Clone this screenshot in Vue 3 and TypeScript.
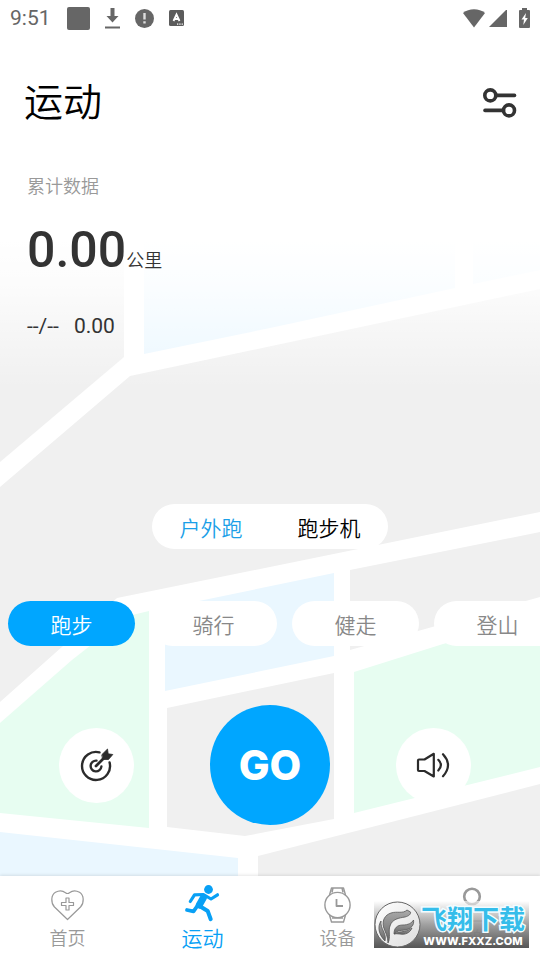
<script setup lang="ts">
import { ref } from 'vue'

const modes: string[] = ['户外跑', '跑步机']
const sports: string[] = ['跑步', '骑行', '健走', '登山']
const activeMode = ref(0)
const activeSport = ref(0)
</script>

<template>
  <div class="page">
    <svg class="map" viewBox="0 0 540 876" preserveAspectRatio="xMidYMax slice" aria-hidden="true">
      <defs>
        <linearGradient id="fade" x1="0" y1="0" x2="0" y2="1">
          <stop offset="0" stop-color="#fff" />
          <stop offset="0.3" stop-color="#fff" stop-opacity="0.8" />
          <stop offset="1" stop-color="#fff" stop-opacity="0" />
        </linearGradient>
      </defs>
      <g fill="#f0f0f0">
        <path d="M0 220H124V357L0 462Z" />
        <path d="M540 289L130 376L0 487V702L117 598L540 512Z" />
        <path d="M350 570L540 532V597L350 650Z" />
        <path d="M167 708L334 673V819L245 836L167 827Z" />
        <path d="M258 876V856L540 784V876Z" />
      </g>
      <g fill="#eaf7ff">
        <path d="M144 220H455V288L270 328L144 354Z" />
        <path d="M473 220H540V270L473 284Z" />
        <path d="M165 608L334 573V656L165 691Z" />
        <path d="M0 832L238 858V876H0Z" />
      </g>
      <g fill="#e7fdf1">
        <path d="M0 723L72 660L128 616L149 611V828L0 813Z" />
        <path d="M354 672L443 644L540 618V767L354 813Z" />
      </g>
      <rect width="540" height="241" fill="#fff" />
      <rect y="240" width="540" height="148" fill="url(#fade)" />
    </svg>

    <div class="status">
      <span class="clock">9:51</span>
      <svg width="23" height="23" viewBox="0 0 23 23"><rect width="23" height="23" rx="2" fill="#666" /></svg>
      <svg width="15" height="22" viewBox="0 0 15 22" fill="#666"><path d="M5.500 1H9.500V9H13.500L7.500 15.500L1.500 9H5.500ZM0 19.500H15V21.500H0Z" /></svg>
      <svg width="19" height="19" viewBox="0 0 19 19"><circle cx="9.500" cy="9.500" r="9.500" fill="#666" /><path d="M8.300 4H10.700V10.500H8.300ZM8.300 12.200H10.700V14.600H8.300Z" fill="#ddd" /></svg>
      <svg width="15" height="16" viewBox="0 0 15 16"><rect width="15" height="16" rx="1.500" fill="#5c5c5c" /><path d="M4.500 11L7.500 4.500L10.500 11M5.500 9H9.500" fill="none" stroke="#fff" stroke-width="1.800" /><path d="M8 13.500h1.300v1.300H8zM10.300 13.500h1.300v1.300h-1.300zM12.600 13.500h1.300v1.300h-1.300z" fill="#fff" /></svg>
      <div class="signals">
        <svg width="22" height="19" viewBox="0 0 22 19" fill="#666"><path d="M0 4C6-1 16-1 22 4L11 18.500Z" /></svg>
        <svg width="18" height="18" viewBox="0 0 18 18" fill="#666"><path d="M18 1V18H0L17 1Z" /></svg>
        <svg class="battery" width="11" height="20" viewBox="0 0 11 20"><path d="M3 0H8V2H10Q11 2 11 3V19Q11 20 10 20H1Q0 20 0 19V3Q0 2 1 2H3Z" fill="#666" /><path d="M7 5L2.500 11.500H5L4.300 17L8.800 10H6.200Z" fill="#fff" /></svg>
      </div>
    </div>

    <header class="header">
      <h1>运动</h1>
      <button class="settings" type="button" aria-label="设置">
        <svg width="34" height="30" viewBox="0 0 34 30" fill="none" stroke="#333" stroke-width="3.600" stroke-linecap="round">
          <circle cx="7.300" cy="7.400" r="5.500" /><path d="M13 7.400H31.500" />
          <circle cx="26" cy="22.400" r="5.500" /><path d="M2 22.400H20.300" />
        </svg>
      </button>
    </header>

    <section class="stats">
      <p class="caption">累计数据</p>
      <p class="total"><strong>0.00</strong><span>公里</span></p>
      <p class="detail"><span>--/--</span><span>0.00</span></p>
    </section>

    <div class="modes">
      <button v-for="(mode, i) in modes" :key="mode" type="button" :class="{ active: i === activeMode }" @click="activeMode = i">{{ mode }}</button>
    </div>

    <div class="sports">
      <button v-for="(sport, i) in sports" :key="sport" type="button" :class="{ active: i === activeSport }" @click="activeSport = i">{{ sport }}</button>
    </div>

    <div class="actions">
      <button class="round goal" type="button" aria-label="目标">
        <svg width="36" height="36" viewBox="0 0 36 36" fill="none" stroke="#2b2b2b" stroke-width="2.400" stroke-linecap="round">
          <path d="M20.500 5.400A14 14 0 1 0 30.600 15.500" />
          <path d="M17.500 13.600A5.400 5.400 0 1 0 22.400 19.500" />
          <path d="M17 19L25 11" stroke-width="2.800" />
          <path d="M23 7.500L28.500 2L29.200 6.800L33.800 7.500L29.500 12.500L24 12.500Z" fill="#2b2b2b" stroke-width="0.800" stroke-linejoin="round" />
        </svg>
      </button>
      <button class="go" type="button">GO</button>
      <button class="round sound" type="button" aria-label="声音">
        <svg width="36" height="36" viewBox="0 0 36 36" fill="none" stroke="#2b2b2b" stroke-width="2.200" stroke-linecap="round" stroke-linejoin="round">
          <path d="M3 12.500H8.500L17.800 6.800V29.500L8.500 24H3Q2 24 2 23V13.500Q2 12.500 3 12.500Z" />
          <path d="M22.300 12.800Q27.500 18 22.300 23.500M27 7.200Q37 18 27 29.300" />
        </svg>
      </button>
    </div>

    <nav class="tabs">
      <a href="#home">
        <svg width="40" height="40" viewBox="0 0 40 40" fill="none" stroke="#999" stroke-width="1.200" stroke-linejoin="round">
          <path d="M19.500 34.500L6.500 22C2.500 17.500 3 10 7.500 7.300C11.500 5 15 5.700 17.500 7.700Q19.500 9.300 21.500 7.700C24 5.700 27.500 5 31.500 7.300C36 10 36.500 17.500 32.500 22Z" />
          <path d="M18 13H21V17.500H25.500V20.500H21V25H18V20.500H13.500V17.500H18Z" />
        </svg>
        <span>首页</span>
      </a>
      <a href="#sport" class="active">
        <svg width="40" height="40" viewBox="0 0 40 40" fill="none" stroke="#08a0f5" stroke-linecap="round" stroke-linejoin="round">
          <circle cx="25.500" cy="4.500" r="4.400" fill="#08a0f5" stroke="none" />
          <path d="M7.300 16.500L11.500 9.800L20.500 9.500L28 14L34.500 9.800" stroke-width="3.200" />
          <path d="M20.500 12.500L16.300 20" stroke-width="7" />
          <path d="M16.500 21L24.700 26L27.700 34.200" stroke-width="4" />
          <path d="M15 20L10.500 26.300L4 25" stroke-width="3.800" />
        </svg>
        <span>运动</span>
      </a>
      <a href="#device">
        <svg width="40" height="40" viewBox="0 0 40 40" fill="none" stroke="#999" stroke-width="1.400" stroke-linejoin="round">
          <circle cx="19.500" cy="20" r="12.600" />
          <path d="M11.500 10L13.500 3H25.500L27.500 10M15 3L14 7.500M24 3L25 7.500M11.500 30L13.500 37H25.500L27.500 30M14 33H25" />
          <path d="M18.500 14V21H25" stroke-width="1.800" />
        </svg>
        <span>设备</span>
      </a>
      <a href="#me">
        <svg width="40" height="40" viewBox="0 0 40 40" fill="none" stroke="#999" stroke-width="2.600">
          <circle cx="19" cy="11.500" r="7.800" />
          <path d="M6 36Q6 24 19 24T32 36Z" stroke-width="1.400" />
        </svg>
        <span>我的</span>
      </a>
      <div class="watermark">
        <svg width="47" height="47" viewBox="0 0 47 47">
          <defs>
            <linearGradient id="disc" x1="0" y1="0" x2="1" y2="1">
              <stop offset="0" stop-color="#fff" /><stop offset="1" stop-color="#ddd" />
            </linearGradient>
            <linearGradient id="swirl" x1="0" y1="0" x2="0" y2="1">
              <stop offset="0" stop-color="#aaa" /><stop offset="1" stop-color="#666" />
            </linearGradient>
          </defs>
          <circle cx="23.500" cy="23.500" r="22.500" fill="url(#disc)" stroke="#666" />
          <g fill="url(#swirl)" stroke="#555" stroke-width="0.800">
            <path d="M14 42C17 36 14 30 16 25C18 18 25 17 31 16C35 15 37 13 36.500 11L33 9C29 13 23 10 17 12C11 14 8 19 9.500 26C11 31 14 35 14 42Z" />
            <path d="M7 20C6 28 13 32 11 40C5 34 3 26 7 20Z" />
            <path d="M20 33C20 27 23 24 29 24C34 24 38 22 39.500 19C40.500 24 37 28 31 29C26 29.500 22 30 20 33Z" />
            <path d="M20 33C24 30 31 32 38 27C36 32 31 34 26 33Q22 32.500 20 33Z" />
          </g>
        </svg>
        <div class="brand"><b>飞翔下载</b><small>WWW.FXXZ.COM</small></div>
      </div>
    </nav>
  </div>
</template>

<style>
body {
  margin: 0;
}
</style>

<style scoped>
.page {
  position: relative;
  display: flex;
  flex-direction: column;
  min-height: 100vh;
  overflow: hidden;
  background: #fff;
  color: #333;
  font-family: Roboto, "Noto Sans CJK SC", sans-serif;
}

.page > * {
  position: relative;
}

.page > .map {
  position: absolute;
  inset: 0 0 84px;
  width: 100%;
  height: calc(100% - 84px);
}

svg {
  display: block;
  flex: none;
}

p,
h1 {
  margin: 0;
}

button {
  padding: 0;
  border: 0;
  background: none;
  color: inherit;
  font: inherit;
  cursor: pointer;
}

.status {
  display: flex;
  align-items: center;
  gap: 15px;
  height: 36px;
  padding: 0 10px;
}

.clock {
  min-width: 42px;
  color: #666;
  font-size: 21px;
  line-height: 24px;
}

.signals {
  display: flex;
  align-items: center;
  gap: 4px;
  margin-left: auto;
}

.battery {
  margin-left: 8px;
}

.header {
  display: flex;
  align-items: center;
  justify-content: space-between;
  margin-top: 39px;
  padding: 0 23px 0 24px;
}

h1 {
  color: #000;
  font-size: 39px;
  font-weight: 350;
  line-height: 56px;
}

.stats {
  display: flex;
  flex-direction: column;
  padding: 43px 27px 32px;
}

.caption {
  color: #999;
  font-size: 18px;
  font-weight: 350;
  line-height: 26px;
}

.total {
  display: flex;
  align-items: baseline;
  margin-top: 18px;
  line-height: 64px;
}

.total strong {
  font-size: 50px;
  font-weight: 500;
}

.total span {
  font-size: 18px;
  font-weight: 350;
}

.detail {
  display: flex;
  gap: 15px;
  margin-top: 18px;
  font-size: 21px;
  line-height: 30px;
}

.modes {
  display: flex;
  align-self: center;
  margin-top: auto;
  border-radius: 23px;
  background: #fff;
}

.modes button {
  width: 118px;
  height: 45px;
  color: #000;
  font-size: 21px;
  font-weight: 350;
}

.modes .active {
  color: #1a9fe8;
}

.sports {
  display: flex;
  gap: 15px;
  margin-top: 52px;
  padding-left: 8px;
  overflow: hidden;
}

.sports button {
  flex: none;
  width: 127px;
  height: 45px;
  border-radius: 23px;
  background: #fff;
  color: #888;
  font-size: 21px;
  font-weight: 350;
}

.sports .active {
  background: #00a6ff;
  color: #fff;
}

.actions {
  display: grid;
  grid-template-columns: 1fr auto 1fr;
  align-items: center;
  margin: 59px 0 51px;
}

.round {
  display: grid;
  place-items: center;
  width: 75px;
  height: 75px;
  border-radius: 50%;
  background: #fff;
}

.goal {
  justify-self: end;
  margin-right: 76px;
}

.sound {
  margin-left: 66px;
}

.go {
  width: 120px;
  height: 120px;
  border-radius: 50%;
  background: #00a6ff;
  color: #fff;
  font-family: Inter, sans-serif;
  font-size: 41px;
  font-weight: 800;
}

.tabs {
  display: grid;
  grid-template-columns: repeat(4, 1fr);
  background: #fff;
  box-shadow: 0 -1px 3px rgba(0, 0, 0, 0.1);
}

.tabs a {
  display: flex;
  flex-direction: column;
  align-items: center;
  padding: 9px 0 7px;
  color: #999;
  font-size: 18px;
  font-weight: 350;
  line-height: 28px;
  text-decoration: none;
}

.tabs .active {
  color: #08a0f5;
  font-size: 21px;
}

.watermark {
  position: absolute;
  right: 11px;
  bottom: 12px;
  display: flex;
  align-items: center;
  width: 155px;
  height: 47px;
  background: linear-gradient(rgba(255, 255, 255, 0.6), rgba(150, 150, 150, 0.9) 50%, #555);
}

.brand {
  display: flex;
  flex-direction: column;
  align-items: center;
  white-space: nowrap;
}

.brand b {
  color: #35bdea;
  font-family: "Noto Sans CJK SC", sans-serif;
  font-size: 26px;
  font-weight: 700;
  line-height: 32px;
  paint-order: stroke fill;
  -webkit-text-stroke: 3px #f2fcff;
}

.brand small {
  color: #fff;
  font-family: Inter, sans-serif;
  font-size: 11px;
  font-weight: 800;
  line-height: 14px;
}
</style>
